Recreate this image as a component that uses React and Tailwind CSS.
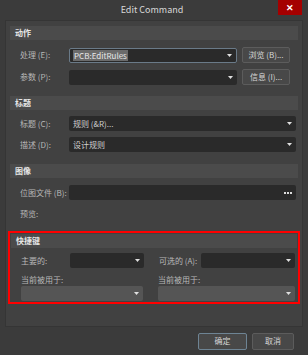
const Arrow = () => (
  <svg width="5" height="3" viewBox="0 0 5 3" className="shrink-0">
    <path d="M0 0 H5 L2.5 3 Z" fill="#e0e0e0" />
  </svg>
)

const Combo = ({ className = '', value, light, selected, focus }) => (
  <div
    className={`flex h-[15px] items-center justify-between rounded-[2px] pl-[3px] pr-[4px] ${
      light ? 'bg-[#555555]' : 'bg-[#2a2a2a]'
    } ${focus ? 'border border-[#6a7a88]' : ''} ${className}`}
  >
    {value ? (
      <span className={`px-[1px] leading-[11px] ${selected ? 'bg-[#6b6b6b] text-[#e8e8e8]' : 'text-[#d0d0d0]'}`}>
        {value}
      </span>
    ) : (
      <span />
    )}
    <Arrow />
  </div>
)

const Btn = ({ children, className = '' }) => (
  <div
    className={`flex items-center justify-center rounded-[2px] border border-[#5c5c5c] bg-[#484848] text-[#d6d6d6] ${className}`}
  >
    {children}
  </div>
)

const Header = ({ children }) => (
  <div className="flex h-[14px] items-center bg-[#4b4b4b] px-[5px] font-bold text-[#e6e6e6]">{children}</div>
)

const Label = ({ children, className = '' }) => (
  <span className={`text-[#b8b8b8] ${className}`}>{children}</span>
)

export default function App() {
  return (
    <div
      className="flex h-[355px] w-[308px] flex-col bg-[#3b3b3b] text-[8px]"
      style={{ fontFamily: '"Noto Sans CJK SC", "Noto Sans", sans-serif' }}
    >
      <div className="flex h-[20px] items-start">
        <div className="flex h-[20px] flex-1 items-center justify-center pl-[26px] text-[9px] text-[#d8d8d8]">
          Edit Command
        </div>
        <div className="mr-[6px] flex h-[15px] w-[24px] items-center justify-center bg-[#a50000] text-[9px] font-bold text-white">
          ✕
        </div>
      </div>

      <div className="mx-[5px] flex h-[307px] flex-col border border-[#353535] bg-[#414141] px-[4px] pt-[5px]">
        <Header>动作</Header>
        <div className="mt-[7px] flex flex-col gap-[6px] pl-[10px] pr-[1px]">
          <div className="flex items-center">
            <Label className="w-[49px]">处理 (E):</Label>
            <Combo className="w-[168px]" value="PCB:EditRules" selected focus />
            <Btn className="ml-[5px] h-[16px] w-[48px]">浏览 (B)...</Btn>
          </div>
          <div className="flex items-center">
            <Label className="w-[49px]">参数 (P):</Label>
            <Combo className="w-[168px]" />
            <Btn className="ml-[5px] h-[16px] w-[48px]">信息 (I)...</Btn>
          </div>
        </div>

        <div className="mt-[11px]">
          <Header>标题</Header>
        </div>
        <div className="mt-[6px] flex flex-col gap-[6px] pl-[10px] pr-[2px]">
          <div className="flex items-center">
            <Label className="w-[49px]">标题 (C):</Label>
            <Combo className="flex-1" value="规则 (&R)..." />
          </div>
          <div className="flex items-center">
            <Label className="w-[49px]">描述 (D):</Label>
            <Combo className="flex-1" value="设计规则" />
          </div>
        </div>

        <div className="mt-[12px]">
          <Header>图像</Header>
        </div>
        <div className="mt-[7px] flex flex-col pl-[10px] pr-[2px]">
          <div className="flex items-center">
            <Label className="w-[49px]">位图文件 (B):</Label>
            <div className="flex h-[15px] flex-1 items-center justify-end gap-[1px] rounded-[2px] bg-[#2a2a2a] pr-[4px]">
              <div className="h-[2px] w-[2px] bg-[#dddddd]" />
              <div className="h-[2px] w-[2px] bg-[#dddddd]" />
              <div className="h-[2px] w-[2px] bg-[#dddddd]" />
            </div>
          </div>
          <Label className="mt-[8px]">预览:</Label>
        </div>

        <div className="mt-[11px] -mx-[2px] border-2 border-[#ff0000] px-[1px] pt-[1px] pb-[1px]">
          <Header>快捷键</Header>
          <div className="mt-[5px] flex pl-[10px] pr-[2px]">
            <div className="flex items-center">
              <Label className="w-[49px]">主要的:</Label>
              <Combo className="w-[74px]" />
            </div>
            <div className="ml-[15px] flex flex-1 items-center">
              <Label className="w-[42px]">可选的 (A):</Label>
              <Combo className="flex-1" />
            </div>
          </div>
          <div className="mt-[6px] flex pl-[10px] pr-[2px]">
            <div className="flex w-[122px] flex-col">
              <Label className="leading-[11px]">当前被用于:</Label>
              <Combo className="mt-[1px] w-full" light />
            </div>
            <div className="ml-[15px] flex flex-1 flex-col">
              <Label className="leading-[11px]">当前被用于:</Label>
              <Combo className="mt-[1px] w-full" light />
            </div>
          </div>
        </div>
      </div>

      <div className="flex flex-1 items-center justify-end gap-[5px] pr-[14px]">
        <Btn className="h-[17px] w-[49px] border-[#6e8494]">确定</Btn>
        <Btn className="h-[17px] w-[42px]">取消</Btn>
      </div>
    </div>
  )
}
